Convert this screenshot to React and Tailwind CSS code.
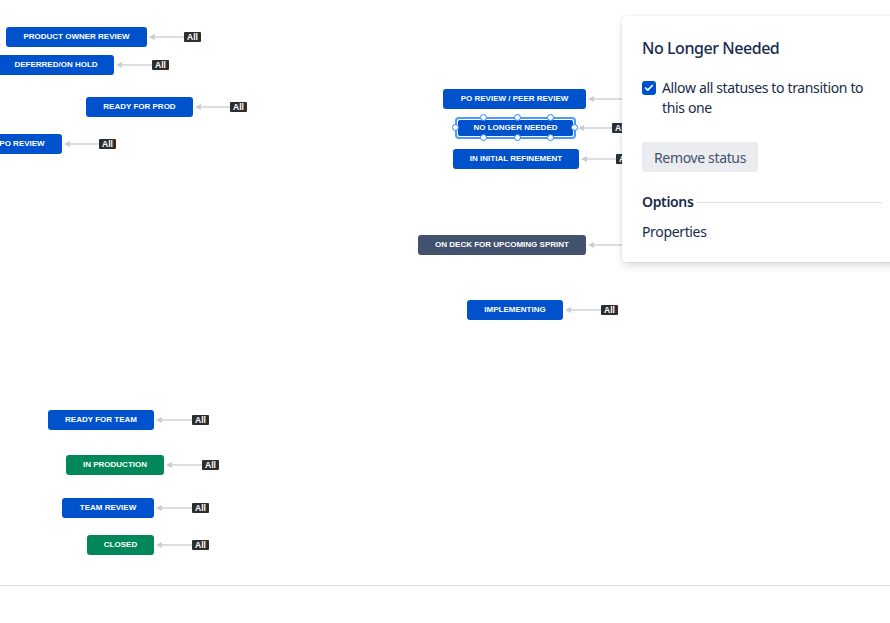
import { Check } from 'lucide-react'

// x / y / w are the node's place on the workflow canvas; badgeX is where the
// "All" transition badge sits (arrow runs from the node to it)
const NODES = [
  { label: 'PRODUCT OWNER REVIEW', x: 6, y: 27, w: 141, badgeX: 184 },
  { label: 'DEFERRED/ON HOLD', x: -2, y: 55, w: 116, badgeX: 152 },
  { label: 'READY FOR PROD', x: 86, y: 97, w: 107, badgeX: 230 },
  { label: 'PO REVIEW', x: -18, y: 134, w: 80, badgeX: 99 },
  { label: 'PO REVIEW / PEER REVIEW', x: 443, y: 89, w: 143, badgeX: 640, hidden: true },
  { label: 'NO LONGER NEEDED', x: 455, y: 118, w: 121, badgeX: 612, selected: true },
  { label: 'IN INITIAL REFINEMENT', x: 453, y: 149, w: 126, badgeX: 616 },
  { label: 'ON DECK FOR UPCOMING SPRINT', x: 418, y: 235, w: 168, badgeX: 640, tone: 'slate', hidden: true },
  { label: 'IMPLEMENTING', x: 467, y: 300, w: 96, badgeX: 601 },
  { label: 'READY FOR TEAM', x: 48, y: 410, w: 106, badgeX: 192 },
  { label: 'IN PRODUCTION', x: 66, y: 455, w: 98, badgeX: 202, tone: 'green' },
  { label: 'TEAM REVIEW', x: 62, y: 498, w: 92, badgeX: 192 },
  { label: 'CLOSED', x: 87, y: 535, w: 67, badgeX: 192, tone: 'green' },
]

const TONES = {
  blue: 'bg-[#0052cc]',
  slate: 'bg-[#42526e]',
  green: 'bg-[#00875a]',
}

export default function App() {
  return (
    <div className="relative w-[890px] h-[623px] overflow-hidden bg-white">

      {/* Canvas */}
      <div className="relative h-[586px] border-b border-[#dcdcdc]">
        {NODES.map(n => <StatusNode key={n.label} node={n} />)}
      </div>

      {/* Status side panel */}
      <div className="absolute left-[622px] top-[16px] w-[280px] rounded-[3px] bg-white pl-5 pr-5 pt-[21px] pb-[20px] shadow-[0_4px_10px_-2px_rgba(9,30,66,0.22),0_0_1px_rgba(9,30,66,0.3)]"
        style={{ fontFamily: '"Noto Sans", "Open Sans", sans-serif' }}>
        <h2 className="text-[16px] leading-[22px] font-medium text-[#172b4d] tracking-[-0.45px]">
          No Longer Needed
        </h2>

        <label className="mt-[19px] flex items-start gap-[6px]">
          <span className="mt-[3px] w-[14px] h-[14px] rounded-[3px] bg-[#0052cc] flex items-center justify-center flex-shrink-0">
            <Check size={10} strokeWidth={4} className="text-white" />
          </span>
          <span className="text-[14px] leading-[20px] text-[#172b4d] tracking-[-0.35px]">
            Allow all statuses to transition to this one
          </span>
        </label>

        <button className="mt-[24px] h-[30px] px-3 rounded-[3px] bg-[#ebecf0] text-[14px] text-[#42526e] tracking-[-0.35px]">
          Remove status
        </button>

        <div className="mt-[20px] flex items-center gap-[3px]">
          <span className="text-[14px] leading-[20px] font-semibold text-[#172b4d] tracking-[-0.35px]">Options</span>
          <span className="flex-1 h-px bg-[#dfe1e6]" />
        </div>

        <p className="mt-[10px] text-[14px] leading-[20px] text-[#172b4d] tracking-[-0.35px]">Properties</p>
      </div>
    </div>
  )
}

// ─── helpers ──────────────────────────────────────────────────────────────────

function StatusNode({ node }) {
  const { label, x, y, w, badgeX, selected, hidden, tone = 'blue' } = node
  const arrowLen = badgeX - (x + w) - 1
  return (
    <div className="absolute flex items-center"
      style={{ left: x, top: selected ? y - 1 : y }}>
      {selected ? (
        <div className="relative h-[22px] rounded-[4px] border-2 border-[#4c9aff] p-px bg-white"
          style={{ width: w }}>
          <div className="h-full rounded-[2px] bg-[#0052cc] flex items-center justify-center">
            <NodeLabel text={label} />
          </div>
          {[0.22, 0.5, 0.78].map(p => (
            <span key={'t' + p}>
              <Handle left={w * p - 4} top={-5} />
              <Handle left={w * p - 4} top={15} />
            </span>
          ))}
          <Handle left={-5} top={5} />
          <Handle left={w - 7} top={5} />
        </div>
      ) : (
        <div className={`h-[20px] rounded-[3px] flex items-center justify-center ${TONES[tone]}`}
          style={{ width: w }}>
          <NodeLabel text={label} />
        </div>
      )}
      <svg width={arrowLen} height="8" className="ml-px flex-shrink-0">
        <polygon points="1,4 7,1 7,7" fill="#c9ccd2" />
        <line x1="6" y1="4" x2={arrowLen} y2="4" stroke="#cfd2d7" strokeWidth="1.5" />
      </svg>
      {!hidden && (
        <span className="h-[10px] px-[3px] rounded-[1px] bg-[#2e2e2e] text-white text-[8.5px] leading-[10px] font-bold"
          style={{ fontFamily: '"Liberation Sans", Arial, sans-serif' }}>
          All
        </span>
      )}
    </div>
  )
}

function NodeLabel({ text }) {
  return (
    <span className="text-white text-[8px] font-bold whitespace-nowrap leading-none"
      style={{ fontFamily: '"Liberation Sans", Arial, sans-serif' }}>
      {text}
    </span>
  )
}

function Handle({ left, top }) {
  return (
    <span className="absolute w-[7px] h-[7px] rounded-full bg-white border border-[#2684ff]"
      style={{ left, top }} />
  )
}
